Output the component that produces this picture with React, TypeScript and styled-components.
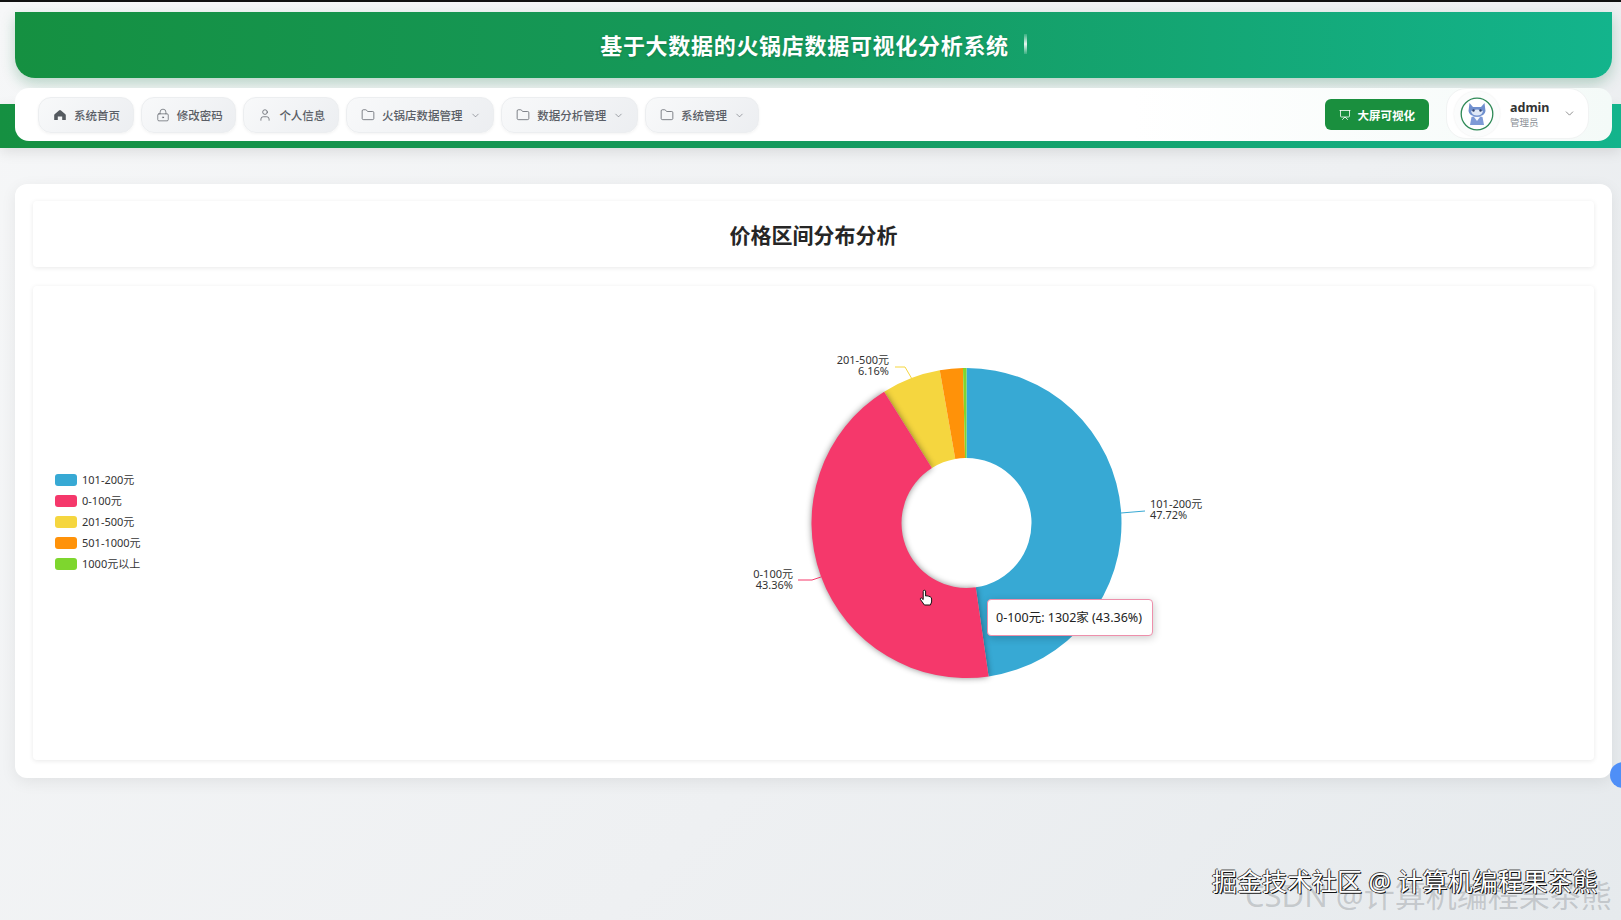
import React from "react";
import styled, { createGlobalStyle } from "styled-components";
import { ChevronDown, Folder, LockKeyhole, Presentation, User } from "lucide-react";

const FONT = `"Noto Sans", "Noto Sans CJK SC", sans-serif`;
const GREEN_GRADIENT = "linear-gradient(90deg, #159041 0%, #159a5e 50%, #13b48c 100%)";

const GlobalStyle = createGlobalStyle`
  html, body {
    margin: 0;
    padding: 0;
    height: 920px;
    overflow: hidden;
  }
  body {
    font-family: ${FONT};
    background: linear-gradient(135deg, #f6f7f8 0%, #eef0f2 60%, #e6eaed 100%);
  }
`;

const Page = styled.div`
  position: relative;
  height: 920px;
  box-sizing: border-box;
  border-top: 2px solid #111;
  overflow: hidden;
`;

const Header = styled.header`
  display: flex;
  align-items: center;
  justify-content: center;
  gap: 15px;
  height: 66px;
  box-sizing: border-box;
  padding-bottom: 2px;
  margin: 10px 9px 0 15px;
  border-radius: 0 0 20px 20px;
  background: ${GREEN_GRADIENT};
  box-shadow: 0 6px 14px rgba(21, 120, 70, 0.26);
`;

const HeaderTitle = styled.h1`
  margin: 0;
  font-size: 22px;
  letter-spacing: 0.7px;
  font-weight: 700;
  color: #fff;
  text-shadow: 0 1px 3px rgba(0, 0, 0, 0.18);
`;

const Caret = styled.span`
  width: 3px;
  height: 20px;
  background: linear-gradient(180deg, rgba(255, 255, 255, 0.15), rgba(255, 255, 255, 0.9), rgba(255, 255, 255, 0.15));
`;

const NavSection = styled.div`
  position: relative;
  height: 60px;
  margin: 10px 0 36px;
  padding: 0 9px 0 15px;

  &::before {
    content: "";
    position: absolute;
    left: 0;
    right: 0;
    top: 16px;
    height: 44px;
    background: ${GREEN_GRADIENT};
    box-shadow: 0 4px 14px rgba(0, 0, 0, 0.1);
  }
`;

const NavBar = styled.nav`
  position: relative;
  display: flex;
  align-items: flex-start;
  height: 53px;
  box-sizing: border-box;
  padding: 0 23px;
  border-radius: 14px;
  background: linear-gradient(90deg, #fff 0%, #fff 70%, #f4faf8 100%);
`;

const NavItems = styled.div`
  display: flex;
  gap: 7px;
  margin-top: 9px;
`;

const NavItem = styled.div`
  display: flex;
  align-items: center;
  height: 36px;
  box-sizing: border-box;
  padding: 0 12.7px 0 14px;
  gap: 7px;
  border: 1px solid #eceef0;
  border-radius: 13px;
  background: linear-gradient(135deg, #f8f9fa 0%, #eceef1 100%);
  box-shadow: 0 1px 3px rgba(0, 0, 0, 0.05);
  color: #5a5e66;
  font-size: 11.5px;
  font-weight: 500;
  white-space: nowrap;
`;

const NavRight = styled.div`
  display: flex;
  align-items: flex-start;
  gap: 17px;
  margin-left: auto;
`;

const BigScreenButton = styled.div`
  display: flex;
  align-items: center;
  gap: 7px;
  height: 31px;
  margin-top: 11px;
  padding: 0 14px;
  border-radius: 6px;
  background: #1a8f3e;
  color: #fff;
  font-size: 11.5px;
  font-weight: 700;
`;

const UserPill = styled.div`
  display: flex;
  align-items: center;
  width: 143px;
  height: 51px;
  box-sizing: border-box;
  padding: 0 12px 0 7px;
  border: 1px solid #f1f3f3;
  border-radius: 20px;
  background: #fff;
`;

const AvatarHalo = styled.div`
  display: flex;
  align-items: center;
  justify-content: center;
  width: 46px;
  height: 46px;
  border-radius: 50%;
  background: #fbfcfc;
  box-shadow: 0 0 2px rgba(0, 0, 0, 0.08);
`;

const UserText = styled.div`
  display: flex;
  flex-direction: column;
  margin: 2px 0 0 10px;
  flex: 1;
`;

const UserName = styled.span`
  font-size: 12.5px;
  line-height: 17px;
  font-weight: 700;
  color: #333;
`;

const UserRole = styled.span`
  font-size: 9.5px;
  line-height: 14px;
  color: #8a8f96;
`;

const MainCard = styled.main`
  display: flex;
  flex-direction: column;
  gap: 19px;
  height: 594px;
  box-sizing: border-box;
  margin: 0 9px 0 15px;
  padding: 17px 18px 18px;
  border-radius: 12px;
  background: #fff;
  box-shadow: 0 4px 16px rgba(0, 0, 0, 0.07);
`;

const TitleCard = styled.div`
  display: flex;
  align-items: center;
  justify-content: center;
  height: 66px;
  flex: none;
  border-radius: 4px;
  background: #fff;
  box-shadow: 0 1px 5px rgba(0, 0, 0, 0.09);
`;

const PageTitle = styled.h2`
  margin: 0;
  font-size: 21px;
  font-weight: 700;
  color: #262626;
`;

const ChartCard = styled.section`
  position: relative;
  display: flex;
  align-items: center;
  flex: 1;
  padding-left: 22px;
  border-radius: 4px;
  background: #fff;
  box-shadow: 0 1px 5px rgba(0, 0, 0, 0.09);
`;

const Legend = styled.ul`
  display: flex;
  flex-direction: column;
  gap: 8.5px;
  width: 685px;
  flex: none;
  margin: 0 0 2px;
  padding: 0;
  list-style: none;
`;

const LegendRow = styled.li`
  display: flex;
  align-items: center;
  gap: 5px;
  height: 12.5px;
  font-size: 11px;
  color: #333;
`;

const LegendText = styled.span`
  padding-bottom: 2px;
`;

const Swatch = styled.span<{ $color: string }>`
  width: 22px;
  height: 12px;
  border-radius: 3px;
  background: ${props => props.$color};
`;

const ChartSvg = styled.svg`
  display: block;
  flex: none;
  overflow: visible;
`;

const Tooltip = styled.div`
  position: absolute;
  left: 954px;
  top: 313px;
  width: 166px;
  height: 37px;
  box-sizing: border-box;
  padding-left: 8px;
  line-height: 35px;
  border: 1px solid #ee8fab;
  border-radius: 4px;
  background: #fff;
  box-shadow: 1px 2px 8px rgba(0, 0, 0, 0.2);
  color: #222;
  font-size: 12.5px;
  white-space: nowrap;
`;

const Cursor = styled.svg`
  position: absolute;
  left: 886px;
  top: 303px;
`;

const SideDot = styled.div`
  position: absolute;
  left: 1610px;
  top: 760px;
  width: 26px;
  height: 26px;
  border-radius: 50%;
  background: #4f8ff7;
`;

const JuejinMark = styled.div`
  position: absolute;
  left: 1212px;
  top: 864px;
  font-size: 25px;
  line-height: 30px;
  color: #fff;
  white-space: nowrap;
  text-shadow: 1px 1px 0 #111, -1px 0 0 #333, 0 -1px 0 #555;
`;

const CsdnMark = styled.div`
  position: absolute;
  left: 1245px;
  top: 875px;
  font-size: 31px;
  line-height: 36px;
  color: rgba(120, 125, 130, 0.32);
  white-space: nowrap;
`;

type Slice = { name: string; value: number; color: string };

const slices: Slice[] = [
  { name: "101-200元", value: 47.72, color: "#37a9d4" },
  { name: "0-100元", value: 43.36, color: "#f5386b" },
  { name: "201-500元", value: 6.16, color: "#f5d63f" },
  { name: "501-1000元", value: 2.4, color: "#ff9209" },
  { name: "1000元以上", value: 0.36, color: "#7ed62e" },
];

const CX = 966.5;
const CY = 522;
const OUTER = 155;
const INNER = 65;

const point = (r: number, pct: number) => {
  const a = (pct / 100) * Math.PI * 2;
  return `${CX + r * Math.sin(a)} ${CY - r * Math.cos(a)}`;
};

const arcPath = (from: number, to: number) => {
  const large = to - from > 50 ? 1 : 0;
  return [
    `M ${point(OUTER, from)}`,
    `A ${OUTER} ${OUTER} 0 ${large} 1 ${point(OUTER, to)}`,
    `L ${point(INNER, to)}`,
    `A ${INNER} ${INNER} 0 ${large} 0 ${point(INNER, from)}`,
    "Z",
  ].join(" ");
};

const Donut: React.FC = () => {
  let start = 0;
  const paths = slices.map(slice => {
    const d = arcPath(start, start + slice.value);
    start += slice.value;
    return { ...slice, d };
  });
  const others = paths.filter(p => p.name !== "0-100元");
  const hovered = paths.find(p => p.name === "0-100元");
  return (
    <ChartSvg width="460" height="360" viewBox="740 342 460 360">
      {others.map(p => (
        <path key={p.name} d={p.d} fill={p.color} />
      ))}
      {hovered && (
        <path
          d={hovered.d}
          fill={hovered.color}
          style={{ filter: "drop-shadow(0 0 3px rgba(0,0,0,0.45))" }}
        />
      )}
      <g fill="none" strokeWidth="1">
        <path d="M1121 512 L1145 510" stroke="#37a9d4" />
        <path d="M821 576 L812 579 L798 579" stroke="#f5386b" />
        <path d="M912 378 L905 366 L895 366" stroke="#f5d63f" />
      </g>
      <g fontSize="11" fill="#333" fontFamily={FONT}>
        <text x="1150" y="507">101-200元</text>
        <text x="1150" y="518">47.72%</text>
        <text x="793" y="577" textAnchor="end">0-100元</text>
        <text x="793" y="588" textAnchor="end">43.36%</text>
        <text x="889" y="363" textAnchor="end">201-500元</text>
        <text x="889" y="374" textAnchor="end">6.16%</text>
      </g>
    </ChartSvg>
  );
};

const HomeIcon: React.FC = () => (
  <svg width="14" height="14" viewBox="0 0 14 14" fill="#555a60">
    <path d="M7 2 Q7.5 2 8 2.4 L12.4 6.2 Q12.8 6.6 12.8 7 V12 H9.2 V8.6 H4.8 V12 H1.2 V7 Q1.2 6.6 1.6 6.2 L6 2.4 Q6.5 2 7 2 Z" />
  </svg>
);

const AvatarIcon: React.FC = () => (
  <svg width="34" height="34" viewBox="0 0 34 34">
    <circle cx="17" cy="17" r="15.8" fill="#fff" stroke="#2f8a57" strokeWidth="1.3" />
    <path d="M9.5 6 L13 10 H21 L24.5 6 L25.5 14 Q25 19 17 19.5 Q9 19 8.5 14 Z" fill="#6f8fce" />
    <path d="M11 14 Q17 11 23 14 Q22 18.5 17 18.5 Q12 18.5 11 14 Z" fill="#dfe8f7" />
    <circle cx="13.5" cy="13.5" r="1.2" fill="#34456e" />
    <circle cx="20.5" cy="13.5" r="1.2" fill="#34456e" />
    <path d="M11.5 20 Q17 18 22.5 20 L24 28 H10 Z" fill="#7e9bd6" />
    <path d="M14 20 L17 24 L20 20 Z" fill="#f4f7fc" />
  </svg>
);

const navItems = [
  { label: "系统首页", icon: <HomeIcon /> },
  { label: "修改密码", icon: <LockKeyhole size={14} strokeWidth={1.2} /> },
  { label: "个人信息", icon: <User size={14} strokeWidth={1.3} /> },
  { label: "火锅店数据管理", icon: <Folder size={14} strokeWidth={1.3} />, dropdown: true },
  { label: "数据分析管理", icon: <Folder size={14} strokeWidth={1.3} />, dropdown: true },
  { label: "系统管理", icon: <Folder size={14} strokeWidth={1.3} />, dropdown: true },
];

export default function App() {
  return (
    <Page>
      <GlobalStyle />
      <Header>
        <HeaderTitle>基于大数据的火锅店数据可视化分析系统</HeaderTitle>
        <Caret />
      </Header>
      <NavSection>
        <NavBar>
          <NavItems>
            {navItems.map(item => (
              <NavItem key={item.label}>
                {item.icon}
                <span>{item.label}</span>
                {item.dropdown && <ChevronDown size={11} strokeWidth={1.2} />}
              </NavItem>
            ))}
          </NavItems>
          <NavRight>
            <BigScreenButton>
              <Presentation size={12} strokeWidth={1.6} />
              大屏可视化
            </BigScreenButton>
            <UserPill>
              <AvatarHalo>
                <AvatarIcon />
              </AvatarHalo>
              <UserText>
                <UserName>admin</UserName>
                <UserRole>管理员</UserRole>
              </UserText>
              <ChevronDown size={13} strokeWidth={1.2} color="#555" />
            </UserPill>
          </NavRight>
        </NavBar>
      </NavSection>
      <MainCard>
        <TitleCard>
          <PageTitle>价格区间分布分析</PageTitle>
        </TitleCard>
        <ChartCard>
          <Legend>
            {slices.map(slice => (
              <LegendRow key={slice.name}>
                <Swatch $color={slice.color} />
                <LegendText>{slice.name}</LegendText>
              </LegendRow>
            ))}
          </Legend>
          <Donut />
          <Tooltip>0-100元: 1302家 (43.36%)</Tooltip>
          <Cursor width="14" height="17" viewBox="0 0 14 17">
            <path
              d="M4.5 1.5 Q6 0.5 6.6 2 V7 L8 6.8 L9.6 7.2 L11.2 7.8 Q12.6 8.3 12.6 10 V13 L11.4 16 H5.4 L1.4 10.4 Q1 9 2.4 9 L4.2 10.6 V2.4 Z"
              fill="#fff"
              stroke="#111"
              strokeWidth="1"
            />
          </Cursor>
        </ChartCard>
      </MainCard>
      <SideDot />
      <CsdnMark>CSDN @计算机编程果茶熊</CsdnMark>
      <JuejinMark>掘金技术社区 @ 计算机编程果茶熊</JuejinMark>
    </Page>
  );
}
